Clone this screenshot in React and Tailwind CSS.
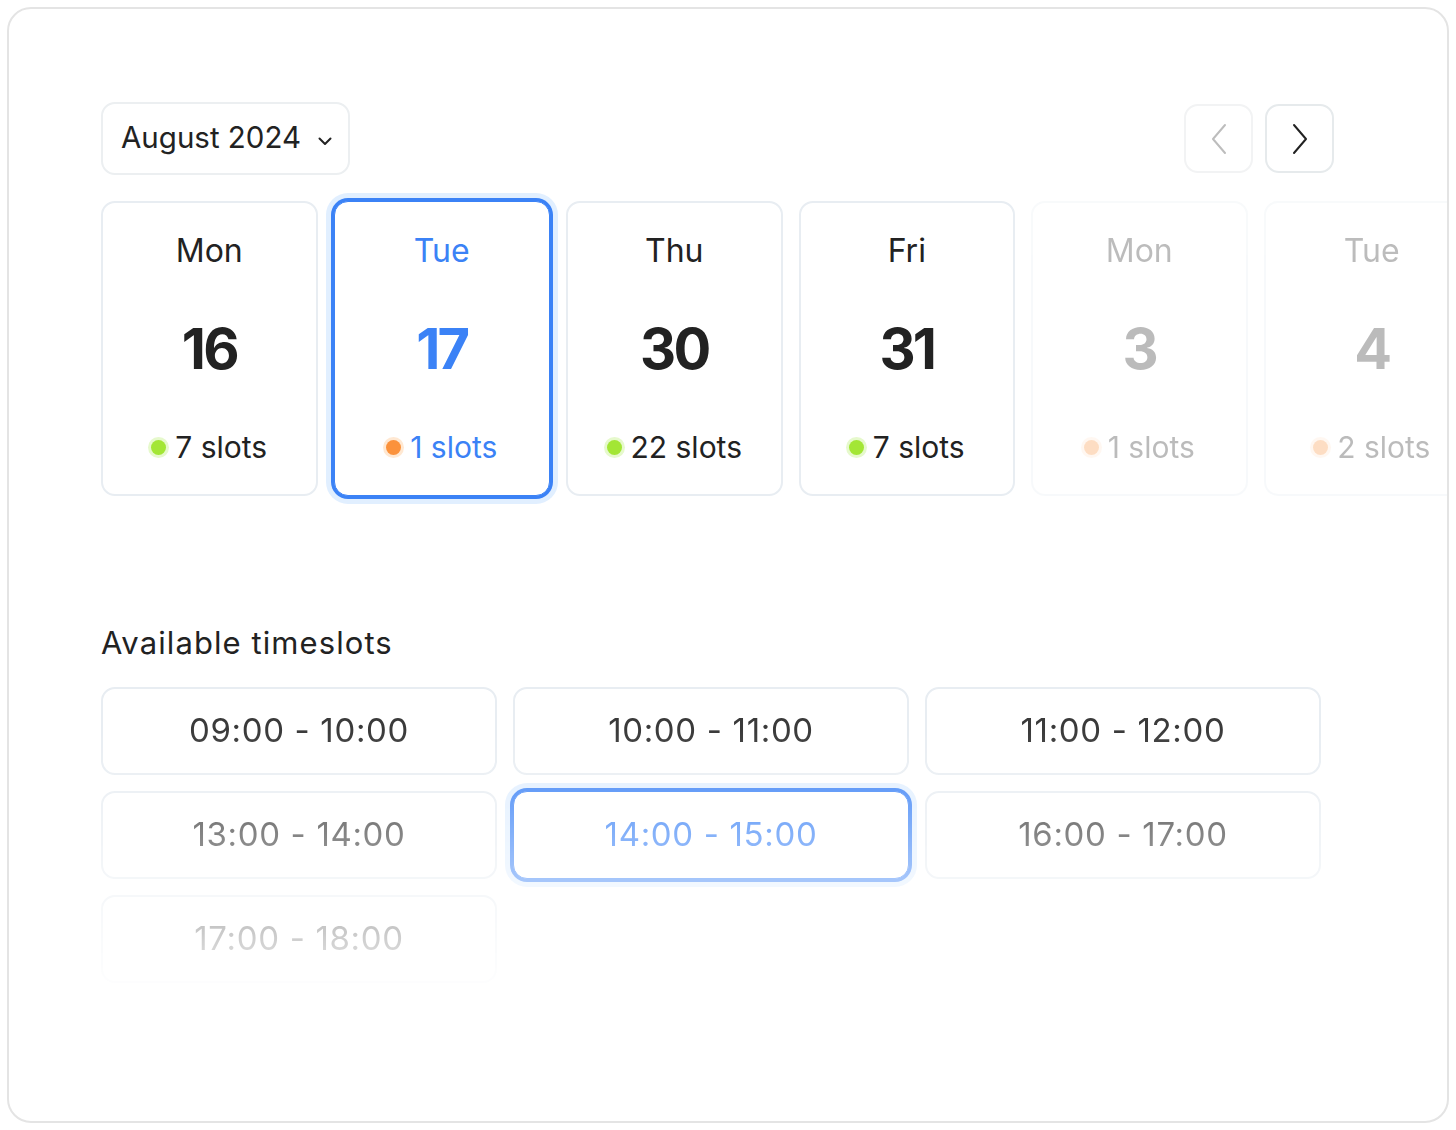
import React from "react";

const days = [
  { d: "Mon", n: "16", s: "7 slots", dot: "green" },
  { d: "Tue", n: "17", s: "1 slots", dot: "orange", selected: true },
  { d: "Thu", n: "30", s: "22 slots", dot: "green" },
  { d: "Fri", n: "31", s: "7 slots", dot: "green" },
  { d: "Mon", n: "3", s: "1 slots", dot: "orange", faded: true },
  { d: "Tue", n: "4", s: "2 slots", dot: "orange", faded: true },
];

const slots = [
  "09:00 - 10:00",
  "10:00 - 11:00",
  "11:00 - 12:00",
  "13:00 - 14:00",
  "14:00 - 15:00",
  "16:00 - 17:00",
  "17:00 - 18:00",
];

function Dot({ color }) {
  return color === "green" ? (
    <span className="inline-block w-[15px] h-[15px] rounded-full bg-[#a3e635] shadow-[0_0_0_3px_#e6f9cc]" />
  ) : (
    <span className="inline-block w-[15px] h-[15px] rounded-full bg-[#fb923c] shadow-[0_0_0_3px_#ffe8d2]" />
  );
}

function DayCard({ d, n, s, dot, selected, faded }) {
  const base =
    "shrink-0 w-[216.5px] h-[295px] rounded-[14px] bg-white flex flex-col items-center";
  const look = selected
    ? "border border-[#3b82f6] shadow-[0_0_0_3px_#3b82f6,0_0_0_8px_#e1efff] text-[#3b82f6]"
    : faded
    ? "border-2 border-[#e8edf2] text-[#222222] opacity-30"
    : "border-2 border-[#e8edf2] text-[#222222]";
  return (
    <div className={`${base} ${look}`}>
      <div className={`${selected ? "mt-[29px]" : "mt-[28px]"} h-[40px] leading-[40px] text-[32px]`}>{d}</div>
      <div className="mt-[46px] h-[64px] leading-[64px] text-[56px] font-bold tracking-[-0.05em]">{n}</div>
      <div className="mt-[48px] h-[36px] flex items-center gap-[9px] text-[30px] leading-[36px]">
        <Dot color={dot} />
        <span>{s}</span>
      </div>
    </div>
  );
}

function Slot({ t, selected }) {
  const look = selected
    ? "border border-[#3b82f6] shadow-[0_0_0_3px_#3b82f6,0_0_0_8px_#e1efff] text-[#3b82f6]"
    : "border-2 border-[#e8edf2] text-[#3a3a3a]";
  return (
    <div className={`h-[88px] rounded-[14px] bg-white flex items-center justify-center text-[33px] tracking-[0.02em] ${look}`}>
      {t}
    </div>
  );
}

export default function App() {
  return (
    <div
      className="w-[1456px] h-[1130px] bg-white p-[7px]"
      style={{ fontFamily: "Inter, 'Noto Sans', sans-serif" }}
    >
      <div className="h-full w-full rounded-[24px] border-2 border-[#e4e4e4] overflow-hidden bg-white pl-[92px] pt-[93px]">
        {/* header */}
        <div className="w-[1233px] flex items-center justify-between">
          <div className="h-[73px] w-[249px] rounded-[14px] border-2 border-[#eceff1] flex items-center pl-[18px] text-[#222222]">
            <span className="text-[29.5px] leading-[36px] -mt-[3px]">August 2024</span>
            <svg className="ml-[17px] mt-[5px]" width="14" height="9" viewBox="0 0 14 9" fill="none">
              <path d="M1.5 1.5 L7 7 L12.5 1.5" stroke="#222" strokeWidth="2" strokeLinecap="round" strokeLinejoin="round" />
            </svg>
          </div>
          <div className="flex items-center gap-3">
            <button className="w-[69px] h-[69px] rounded-[14px] border-2 border-[#f2f3f4] bg-white flex items-center justify-center">
              <svg width="18" height="32" viewBox="0 0 18 32" fill="none">
                <path d="M15 2 L3 16 L15 30" stroke="#bdbdbd" strokeWidth="2" strokeLinecap="round" strokeLinejoin="round" />
              </svg>
            </button>
            <button className="w-[69px] h-[69px] rounded-[14px] border-2 border-[#e6eaec] bg-white flex items-center justify-center">
              <svg width="18" height="32" viewBox="0 0 18 32" fill="none">
                <path d="M3 2 L15 16 L3 30" stroke="#222" strokeWidth="2" strokeLinecap="round" strokeLinejoin="round" />
              </svg>
            </button>
          </div>
        </div>

        {/* day cards */}
        <div className="mt-[26px] flex gap-4">
          {days.map((x, i) => (
            <DayCard key={i} {...x} />
          ))}
        </div>

        {/* timeslots */}
        <div className="mt-[129px] text-[31px] leading-[36px] tracking-[0.035em] text-[#222222]">Available timeslots</div>
        <div className="mt-[26px] w-[1220px] grid grid-cols-3 gap-4 [mask-image:linear-gradient(to_bottom,black_43px,transparent_320px)] pb-[4px]">
          {slots.map((t, i) => (
            <Slot key={i} t={t} selected={i === 4} />
          ))}
        </div>
      </div>
    </div>
  );
}
